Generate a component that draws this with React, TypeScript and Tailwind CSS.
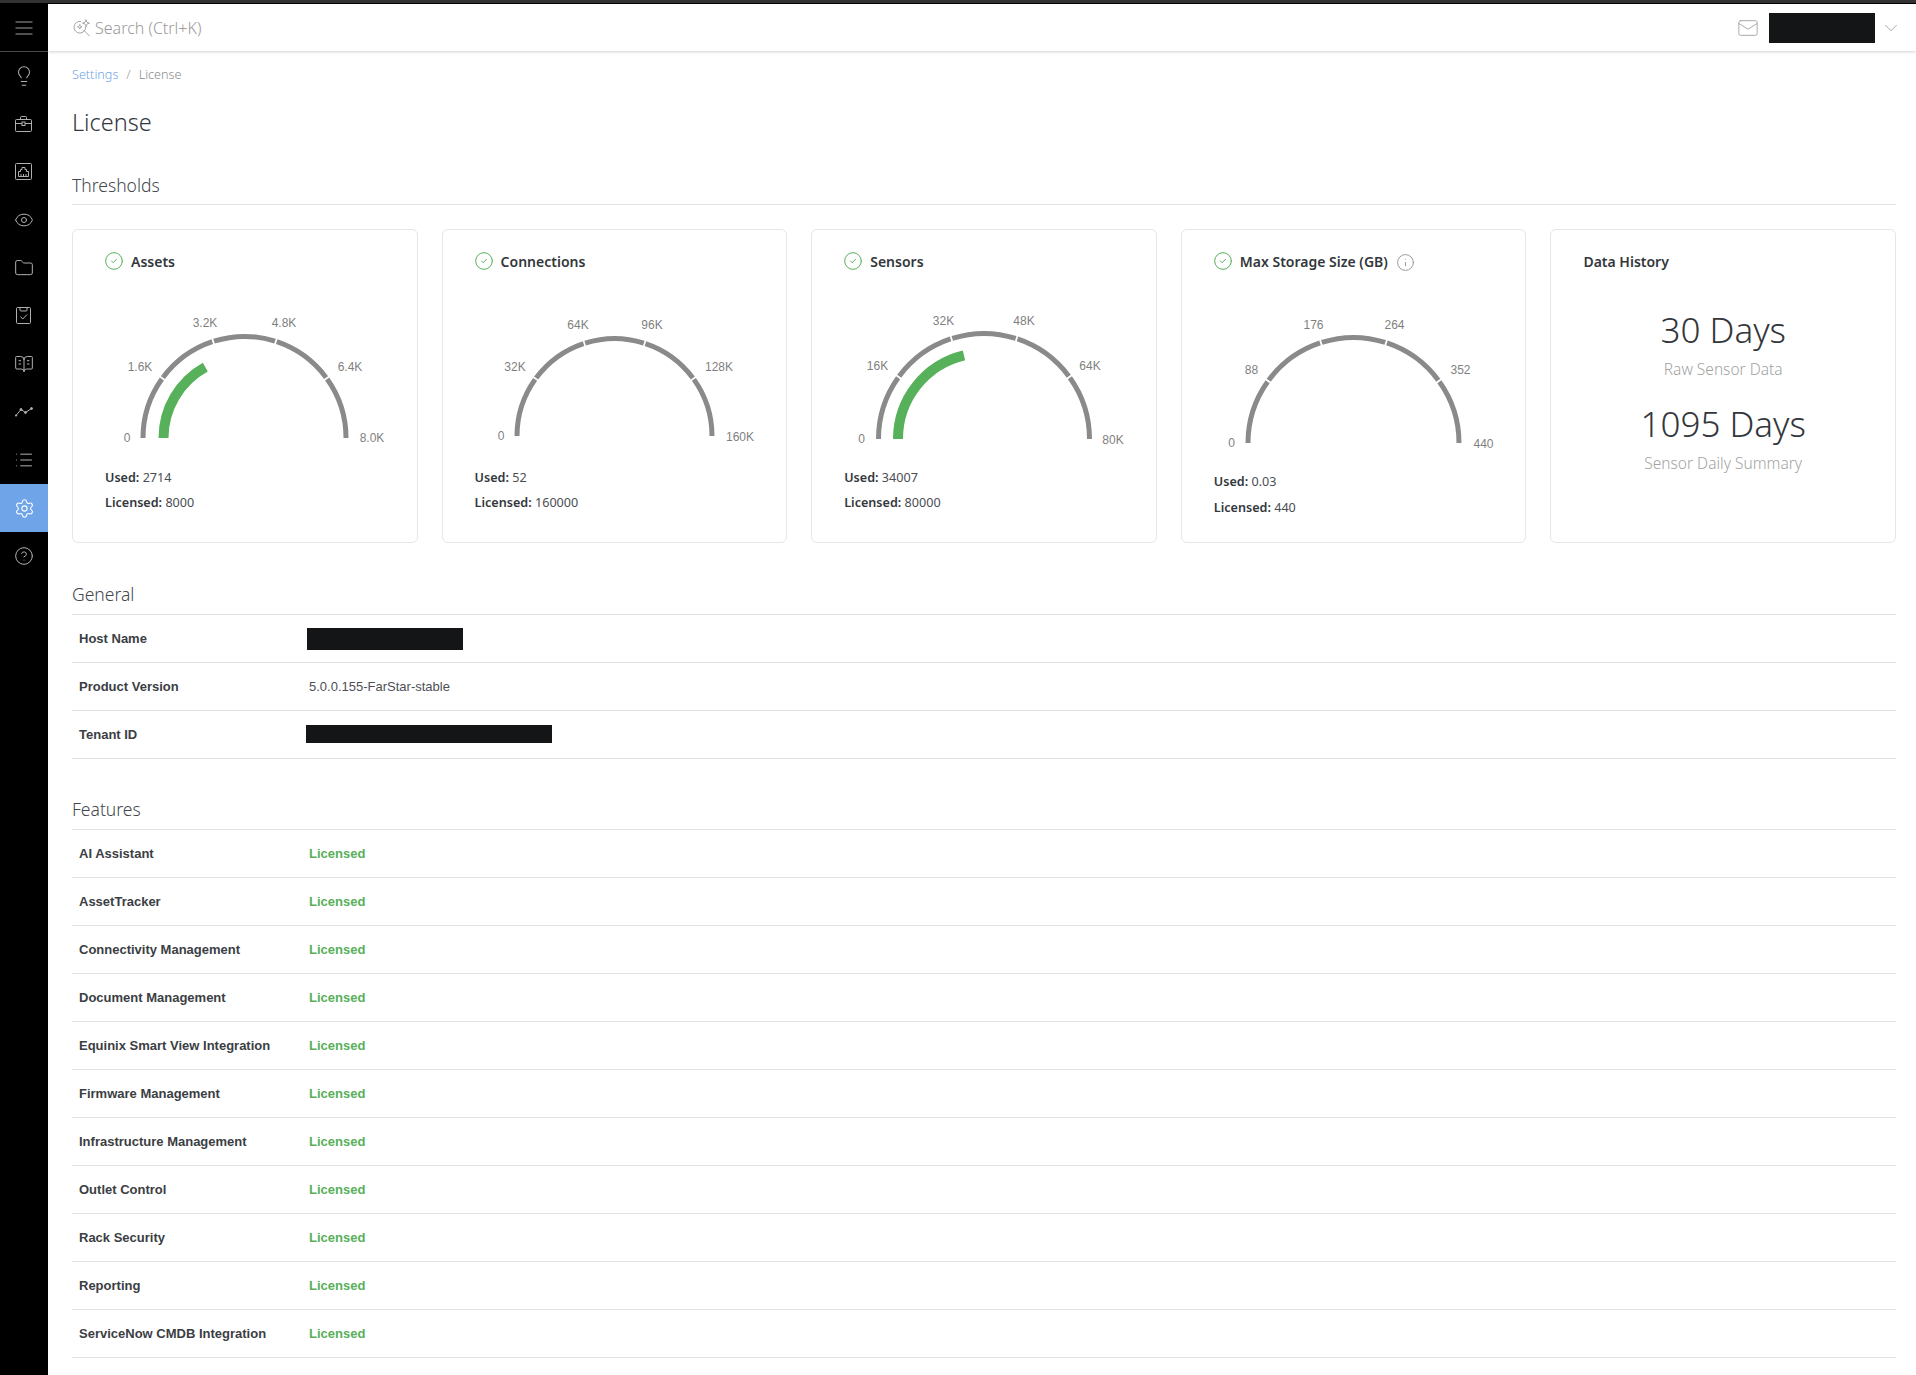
import {
  BookOpenText,
  ChevronDown,
  CircleCheck,
  CircleHelp,
  Eye,
  Folder,
  Info,
  Lightbulb,
  List,
  Mail,
  Settings,
} from 'lucide-react';
import type { ReactNode } from 'react';

const sansFont = "font-['Noto_Sans',sans-serif]";
const armFont = "font-['Liberation_Sans',Arial,sans-serif]";

function MenuGlyph() {
  return (
    <svg width="18" height="14" viewBox="0 0 18 14" fill="none" stroke="#c4c4c4" strokeWidth="0.8">
      <path d="M0.5 1h17M0.5 7h17M0.5 13h17" />
    </svg>
  );
}

function BriefcaseGlyph() {
  return (
    <svg width="18" height="17" viewBox="0 0 18 17" fill="none" stroke="#b0b0b0" strokeWidth="1">
      <rect x="0.5" y="3.5" width="16" height="12" rx="1" />
      <path d="M5.5 3.5V1.5a1 1 0 0 1 1-1h4a1 1 0 0 1 1 1v2M0.5 7.5h6.5M10 7.5h6.5" />
      <rect x="7" y="6" width="3" height="3.5" />
    </svg>
  );
}

function EthernetGlyph() {
  return (
    <svg width="18" height="18" viewBox="0 0 18 18" fill="none" stroke="#b0b0b0" strokeWidth="1">
      <rect x="0.5" y="0.5" width="16" height="16" rx="1" />
      <path d="M3.5 13.5V8.5H5.5V6.5H7V4.5H10V6.5H11.5V8.5H13.5V13.5ZM6 11V13.5M8.5 11V13.5M11 11V13.5" />
    </svg>
  );
}

function ClipboardGlyph() {
  return (
    <svg width="16" height="18" viewBox="0 0 16 18" fill="none" stroke="#b0b0b0" strokeWidth="1">
      <rect x="0.5" y="0.5" width="14" height="16" rx="1" />
      <path d="M4 0.5V3a1 1 0 0 0 1 1h5a1 1 0 0 0 1-1V0.5M4.5 9.5L6.8 12L11 7.5" />
    </svg>
  );
}

function TrendGlyph() {
  return (
    <svg width="18" height="10" viewBox="0 0 18 10" fill="#b0b0b0" stroke="#b0b0b0" strokeWidth="1">
      <path d="M1 8.5L6 2.5L10.5 5.5L16.5 1.5" fill="none" />
      <circle cx="6" cy="2.5" r="1" />
      <circle cx="10.5" cy="5.5" r="1" />
      <circle cx="16.5" cy="1.5" r="1" />
      <circle cx="1" cy="8.5" r="0.7" />
    </svg>
  );
}

function SearchSparkGlyph() {
  return (
    <svg width="18" height="18" viewBox="0 0 18 18" fill="none" stroke="#a3a3a3" strokeWidth="1">
      <path d="M8 2.6A5.8 5.8 0 1 0 12.6 8" />
      <path d="M10.8 11.2L16.5 17" />
      <path d="M13 0.6C13.3 3 14 3.8 16.5 4.2C14 4.6 13.4 5.4 13 7.8C12.6 5.4 12 4.6 9.6 4.2C12 3.8 12.7 3 13 0.6Z" />
      <path d="M6.8 5.5C7 7 7.6 7.6 9 7.8C7.6 8 7 8.6 6.8 10C6.6 8.6 6 8 4.6 7.8C6 7.6 6.6 7 6.8 5.5Z" />
    </svg>
  );
}

const lucideProps = { size: 20, strokeWidth: 1.2, color: '#b0b0b0' };

const navItems: { key: string; icon: ReactNode; active?: boolean }[] = [
  { key: 'insights', icon: <Lightbulb size={22} strokeWidth={1.1} color="#b0b0b0" /> },
  { key: 'assets', icon: <BriefcaseGlyph /> },
  { key: 'network', icon: <EthernetGlyph /> },
  { key: 'monitor', icon: <Eye {...lucideProps} /> },
  { key: 'files', icon: <Folder {...lucideProps} /> },
  { key: 'tasks', icon: <ClipboardGlyph /> },
  { key: 'docs', icon: <BookOpenText {...lucideProps} /> },
  { key: 'trends', icon: <TrendGlyph /> },
  { key: 'lists', icon: <List {...lucideProps} /> },
  { key: 'settings', icon: <Settings size={21} strokeWidth={1.2} color="#ffffff" />, active: true },
  { key: 'help', icon: <CircleHelp {...lucideProps} /> },
];

function polar(cx: number, cy: number, r: number, deg: number) {
  const a = (Math.PI * (180 - deg)) / 180;
  return [cx + r * Math.cos(a), cy - r * Math.sin(a)];
}

function arcPath(cx: number, cy: number, r: number, from: number, to: number) {
  const [x0, y0] = polar(cx, cy, r, from);
  const [x1, y1] = polar(cx, cy, r, to);
  return `M${x0} ${y0}A${r} ${r} 0 0 1 ${x1} ${y1}`;
}

interface GaugeData {
  title: string;
  info?: boolean;
  used: string;
  licensed: string;
  fraction: number;
  cx: number;
  cy: number;
  r: number;
  greenR: number;
  svgHeight: string;
  statsClass: string;
  labels: [string, number, number][];
}

const gauges: GaugeData[] = [
  {
    title: 'Assets',
    used: '2714',
    licensed: '8000',
    fraction: 2714 / 8000,
    cx: 171.5,
    cy: 149,
    r: 104,
    greenR: 86,
    svgHeight: 'h-[176px]',
    statsClass: 'leading-[25px]',
    labels: [
      ['0', 54, 149],
      ['1.6K', 67, 78],
      ['3.2K', 132, 34],
      ['4.8K', 211, 34],
      ['6.4K', 277, 78],
      ['8.0K', 299, 149],
    ],
  },
  {
    title: 'Connections',
    used: '52',
    licensed: '160000',
    fraction: 52 / 160000,
    cx: 171.5,
    cy: 147,
    r: 100,
    greenR: 82,
    svgHeight: 'h-[176px]',
    statsClass: 'leading-[25px]',
    labels: [
      ['0', 58, 147],
      ['32K', 72, 78],
      ['64K', 135, 36],
      ['96K', 209, 36],
      ['128K', 276, 78],
      ['160K', 297, 148],
    ],
  },
  {
    title: 'Sensors',
    used: '34007',
    licensed: '80000',
    fraction: 34007 / 80000,
    cx: 172,
    cy: 150,
    r: 108,
    greenR: 91,
    svgHeight: 'h-[176px]',
    statsClass: 'leading-[25px]',
    labels: [
      ['0', 49.5, 150],
      ['16K', 65.5, 77],
      ['32K', 131.5, 32],
      ['48K', 212, 32],
      ['64K', 278, 77],
      ['80K', 301, 151],
    ],
  },
  {
    title: 'Max Storage Size (GB)',
    info: true,
    used: '0.03',
    licensed: '440',
    fraction: 0.03 / 440,
    cx: 171.5,
    cy: 154,
    r: 108,
    greenR: 91,
    svgHeight: 'h-[180px]',
    statsClass: 'leading-[26px]',
    labels: [
      ['0', 49.5, 154],
      ['88', 69.5, 81],
      ['176', 131.5, 36],
      ['264', 212.5, 36],
      ['352', 278.5, 81],
      ['440', 301.5, 155],
    ],
  },
];

function Gauge({ data }: { data: GaugeData }) {
  const mid = data.r - 2.5;
  const segments = [0, 1, 2, 3, 4];
  return (
    <svg className={`block w-full ${data.svgHeight}`}>
      {segments.map((i) => (
        <path
          key={i}
          d={arcPath(data.cx, data.cy, mid, i * 36 + (i ? 0.5 : 0), (i + 1) * 36 - (i < 4 ? 0.5 : 0))}
          fill="none"
          stroke="#8a8a8a"
          strokeWidth="5"
        />
      ))}
      <path
        d={arcPath(data.cx, data.cy, data.greenR - 5, 0, data.fraction * 180)}
        fill="none"
        stroke="#57b05a"
        strokeWidth="10"
      />
      {data.labels.map(([text, x, y]) => (
        <text
          key={text}
          x={x}
          y={y}
          textAnchor="middle"
          dominantBaseline="central"
          fill="#7f7f7f"
          className={`${armFont} text-[12px]`}
        >
          {text}
        </text>
      ))}
    </svg>
  );
}

function GaugeCard({ data }: { data: GaugeData }) {
  return (
    <div className="h-[314px] rounded-[6px] border border-[#e6e6e6] bg-white">
      <div className="mt-[19px] flex h-[24px] items-center gap-[7px] pl-[31px]">
        <CircleCheck size={20} strokeWidth={1.2} color="#57b05a" />
        <span className="text-[14px] font-semibold text-[#33373c]">{data.title}</span>
        {data.info && <Info size={19} strokeWidth={1.1} color="#8a8a8a" className="mt-[3px] ml-[1px]" />}
      </div>
      <div className="h-[16px]" />
      <Gauge data={data} />
      <div className={`pl-[32px] text-[12.6px] text-[#4a4d52] ${data.statsClass}`}>
        <div>
          <span className="font-semibold text-[#33373c]">Used:</span> {data.used}
        </div>
        <div>
          <span className="font-semibold text-[#33373c]">Licensed:</span> {data.licensed}
        </div>
      </div>
    </div>
  );
}

function SectionHeading({ children, className }: { children: ReactNode; className: string }) {
  return (
    <h3 className={`border-b border-[#e3e3e3] text-[17.5px] leading-[28px] font-[350] text-[#43474c] ${className}`}>
      {children}
    </h3>
  );
}

function Row({ label, children }: { label: string; children: ReactNode }) {
  return (
    <div className={`flex h-[48px] items-center border-b border-[#e3e3e3] text-[13px] ${armFont}`}>
      <div className="w-[237px] shrink-0 pl-[7px] font-bold text-[#3b3e43]">{label}</div>
      <div className="flex-1 text-[#4d5055]">{children}</div>
    </div>
  );
}

const features = [
  'AI Assistant',
  'AssetTracker',
  'Connectivity Management',
  'Document Management',
  'Equinix Smart View Integration',
  'Firmware Management',
  'Infrastructure Management',
  'Outlet Control',
  'Rack Security',
  'Reporting',
  'ServiceNow CMDB Integration',
];

export default function App() {
  return (
    <div className={`flex h-[1375px] flex-col overflow-hidden bg-white ${sansFont}`}>
      <div className="h-[4px] shrink-0 border-b border-black bg-[#333333]" />
      <div className="flex min-h-0 flex-1">
        <aside className="w-[48px] shrink-0 bg-black">
          <div className="flex h-[48px] items-center justify-center border-b border-[#4a4a4a]">
            <MenuGlyph />
          </div>
          {navItems.map((item) => (
            <div
              key={item.key}
              className={`flex h-[48px] items-center justify-center ${item.active ? 'bg-[#6fa5e8]' : ''}`}
            >
              {item.icon}
            </div>
          ))}
        </aside>

        <main className="min-w-0 flex-1">
          <header className="relative flex h-[47px] items-center shadow-[0_1px_3px_rgba(0,0,0,0.18)]">
            <div className="ml-[25px] flex items-center gap-[4px]">
              <SearchSparkGlyph />
              <span className="mt-[1px] text-[16px] font-[350] text-[#9a9a9a]">Search (Ctrl+K)</span>
            </div>
            <div className="ml-auto flex items-center">
              <Mail size={22} strokeWidth={1} color="#a3a3a3" />
              <div className="ml-[10px] h-[30px] w-[106px] bg-[#131517]" />
              <ChevronDown size={22} strokeWidth={1} color="#a3a3a3" className="mr-[14px] ml-[5px]" />
            </div>
          </header>

          <div className="pr-[20px] pl-[24px]">
            <div className="mt-[14px] flex h-[20px] items-center text-[12.6px] font-[350]">
              <span className="text-[#6fa5e8]">Settings</span>
              <span className="mx-[8px] text-[#9a9a9a]">/</span>
              <span className="text-[#8a8a8a]">License</span>
            </div>
            <h1 className="mt-[19px] text-[23.5px] leading-[36px] font-[350] text-[#33373c]">License</h1>

            <SectionHeading className="mt-[31px] pb-[5px]">Thresholds</SectionHeading>
            <div className="mt-[24px] grid grid-cols-5 gap-[24px]">
              {gauges.map((g) => (
                <GaugeCard key={g.title} data={g} />
              ))}
              <div className="h-[314px] rounded-[6px] border border-[#e6e6e6] bg-white">
                <div className="mt-[19px] flex h-[24px] items-center pl-[32px] text-[14px] font-semibold text-[#33373c]">
                  Data History
                </div>
                <div className="mt-[33px] flex flex-col items-center">
                  <div className="text-[35px] leading-[48px] font-[350] text-[#33373c]">30 Days</div>
                  <div className="mt-[3px] text-[15.5px] leading-[24px] font-[350] text-[#a3a3a3]">Raw Sensor Data</div>
                  <div className="mt-[19px] text-[35px] leading-[48px] font-[350] text-[#33373c]">1095 Days</div>
                  <div className="mt-[3px] text-[15.5px] leading-[24px] font-[350] text-[#a3a3a3]">
                    Sensor Daily Summary
                  </div>
                </div>
              </div>
            </div>

            <SectionHeading className="mt-[37px] pb-[6px]">General</SectionHeading>
            <Row label="Host Name">
              <div className="ml-[-2px] h-[22px] w-[156px] bg-[#131517]" />
            </Row>
            <Row label="Product Version">5.0.0.155-FarStar-stable</Row>
            <Row label="Tenant ID">
              <div className="mt-[-2px] ml-[-3px] h-[18px] w-[246px] bg-[#131517]" />
            </Row>

            <SectionHeading className="mt-[36px] pb-[6px]">Features</SectionHeading>
            {features.map((f) => (
              <Row key={f} label={f}>
                <span className="font-bold text-[#57b05a]">Licensed</span>
              </Row>
            ))}
          </div>
        </main>
      </div>
    </div>
  );
}
